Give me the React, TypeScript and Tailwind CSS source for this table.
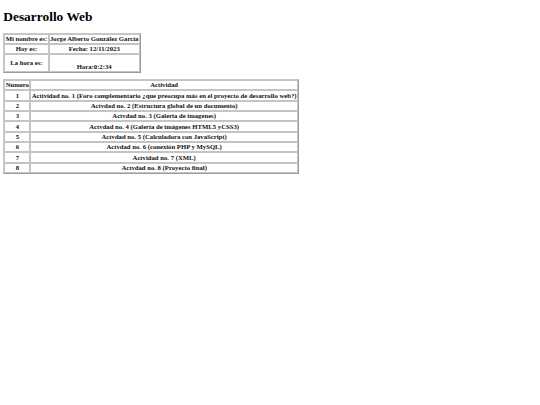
export default function App() {
  const cell =
    "border border-[#c4c4c4] px-[0.4px] py-[0.3px] font-bold text-center align-middle leading-[7.7px]";
  const table =
    "border-separate border-spacing-[0.825px] border border-t-[#c8c8c8] border-l-[#c8c8c8] border-r-[#9c9c9c] border-b-[#9c9c9c]";
  const acts = [
    "Actividad no. 1 (Foro complementario ¿que preocupa más en el proyecto de desarrollo web?)",
    "Actvdad no. 2 (Estructura global de un documento)",
    "Actvdad no. 3 (Galeria de imagenes)",
    "Actvdad no. 4 (Galería de imágenes HTML5 yCSS3)",
    "Actvdad no. 5 (Calculadora con JavaScript)",
    "Actvdad no. 6 (conexión PHP y MySQL)",
    "Actvidad no. 7 (XML)",
    "Actvdad no. 8 (Proyecto final)",
  ];
  return (
    <div className="min-h-[405px] bg-white text-[#111] px-[3.3px] text-[6.7px] [font-family:'Liberation_Serif',serif]">
      <h1 className="text-[13.4px] font-bold mt-[8.8px] mb-[8.6px] leading-[15.2px] text-black">Desarrollo Web</h1>
      <table className={table}>
        <tbody>
          <tr>
            <th className={cell}>Mi nombre es:</th>
            <th className={cell}>Jorge Alberto González García</th>
          </tr>
          <tr>
            <th className={cell}>Hoy es:</th>
            <th className={cell}>Fecha: 12/11/2023</th>
          </tr>
          <tr>
            <th className={cell}>La hora es:</th>
            <th className={cell}>
              <br />
              Hora:0:2:34
            </th>
          </tr>
        </tbody>
      </table>
      <table className={table + " mt-[6px]"}>
        <tbody>
          <tr>
            <th className={cell}>Numero</th>
            <th className={cell}>Actividad</th>
          </tr>
          {acts.map((a, i) => (
            <tr key={i}>
              <th className={cell}>{i + 1}</th>
              <th className={cell}>{a}</th>
            </tr>
          ))}
        </tbody>
      </table>
    </div>
  );
}
